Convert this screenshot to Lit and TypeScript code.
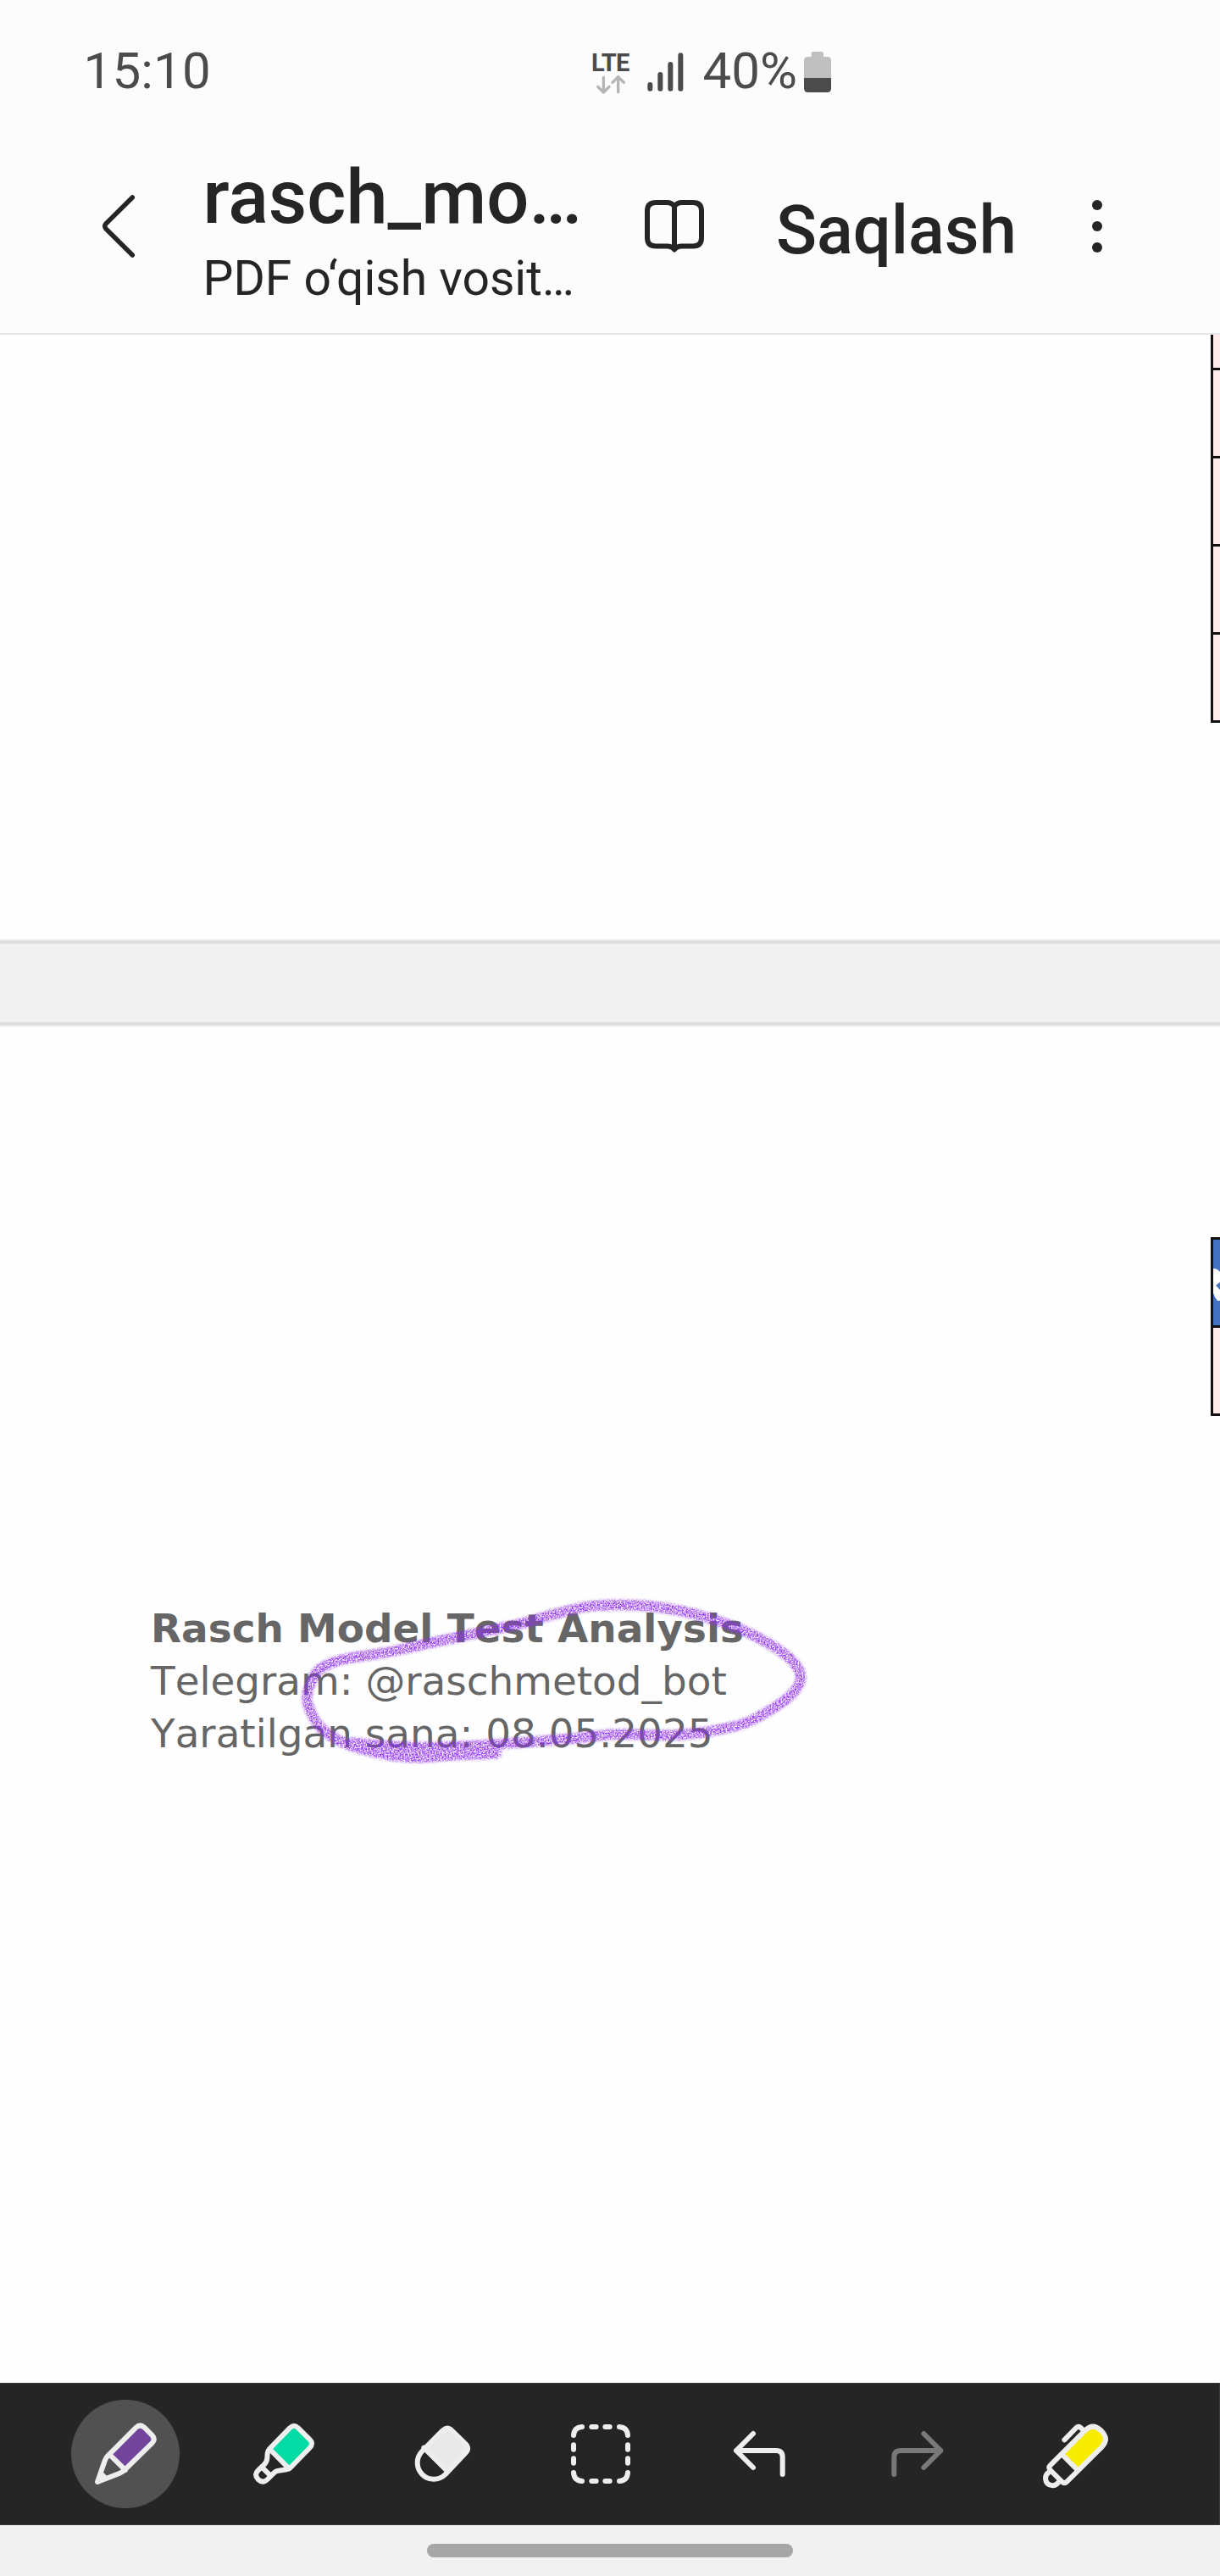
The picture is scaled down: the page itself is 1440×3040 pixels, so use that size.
import { LitElement, html, css, svg } from "lit";
import { customElement } from "lit/decorators.js";

type Pt = [number, number];

/** Smooth curve through the points (Catmull-Rom converted to cubic Béziers). */
function smooth(p: Pt[]): string {
  let d = `M${p[0][0]} ${p[0][1]}`;
  for (let i = 0; i < p.length - 1; i++) {
    const a = p[i - 1] ?? p[i];
    const b = p[i];
    const c = p[i + 1];
    const e = p[i + 2] ?? c;
    d += `C${b[0] + (c[0] - a[0]) / 6} ${b[1] + (c[1] - a[1]) / 6} ${c[0] - (e[0] - b[0]) / 6} ${c[1] - (e[1] - b[1]) / 6} ${c[0]} ${c[1]}`;
  }
  return d;
}

/** Pencil loop around the bot name, in thirds of a pixel. */
const LOOP: Pt[] = [
  [1338, 628], [1280, 630], [1180, 634], [1060, 642], [960, 634], [860, 612], [780, 582], [715, 535],
  [680, 480], [667, 430], [684, 370], [718, 325], [800, 294], [950, 270], [1100, 238],
  [1300, 195], [1440, 165], [1530, 138], [1660, 108], [1780, 102], [1910, 110], [2060, 140],
  [2210, 192], [2320, 250], [2390, 305], [2416, 358], [2390, 412], [2330, 460], [2220, 520],
  [2090, 550], [1960, 563], [1760, 560], [1610, 575], [1440, 588], [1260, 600], [1100, 606],
  [960, 602], [830, 590],
];

@customElement("tool-button")
class ToolButton extends LitElement {
  static properties = { name: {}, active: { type: Boolean } };
  declare name: string;
  declare active: boolean;

  static styles = css`
    :host { display: flex; justify-content: center; width: 187px; }
    .disc { width: 128px; height: 128px; border-radius: 50%; display: flex; align-items: center; justify-content: center; }
    .on { background: #515151; }
    svg { width: 96px; height: 96px; display: block; overflow: visible; }
    .ln { fill: none; stroke: #eee; stroke-width: 18; stroke-linecap: round; stroke-linejoin: round; }
    .dim { stroke: #787878; }
  `;

  private shapes: Record<string, [string, unknown]> = {
    pen: ["120 144 288 288", svg`
      <path fill="#72459b" d="M207 289L302 194Q316 181 331 194L358 221Q372 236 358 250L264 345Z"/>
      <path class="ln" d="M207 289L302 194Q316 181 331 194L358 221Q372 236 358 250L262 344Q254 352 244 356L165 387L191 312Q195 300 207 289ZM207 289L264 345"/>
      <path fill="#eee" d="M183 350L201 368L168 392L160 384Z"/>`],
    marker: ["681 144 288 288", svg`
      <path fill="#02dba3" d="M774 270L846 196Q861 181 876 196L916 236Q932 251 916 267L845 341Z"/>
      <path class="ln" d="M774 270L846 196Q861 181 876 196L916 236Q932 251 916 267L849 336Q844 341 834 343L806 347Q796 348 789 356L767 378Q751 394 734 378Q718 361 735 345L755 326Q765 316 766 303L767 286Q768 276 774 270ZM774 270L844 340M750 337L777 364"/>`],
    eraser: ["42 144 288 288", svg`
      <path fill="#e9e9e9" d="M118 272L187 205Q204 189 220 205L267 251Q285 268 268 285L200 355Z"/>
      <path class="ln" d="M114 279L187 205Q204 189 220 205L267 251Q285 268 268 285L196 361A58 58 0 0 1 114 279ZM121 266L206 351"/>`],
    select: ["603 144 288 288", svg`
      <path class="ln" d="M651 222Q653 194 681 192M813 192Q841 194 843 222M843 354Q841 382 813 384M681 384Q653 382 651 354
        M715 192H731M763 192H779M715 384H731M763 384H779M651 256V272M651 304V320M843 256V272M843 304V320"/>`],
    undo: ["1164 144 288 288", svg`
      <path class="ln" d="M1287 216L1227 276L1287 336M1227 276H1368Q1391 276 1391 299V360"/>`],
    redo: ["225 144 288 288", svg`
      <path class="ln dim" d="M391 216L451 276L391 336M451 276H309Q286 276 286 299V360"/>`],
    highlighter: ["786 144 288 288", svg`
      <path fill="#f8ec00" d="M881 293L962 209Q988 176 1018 206Q1048 236 1022 263L933 343Z"/>
      <path class="ln" d="M839 328L962 205Q990 177 1019 205Q1049 235 1021 264L898 386Q889 394 880 386L839 345Q831 336 839 328ZM879 288L934 343M889 238L931 195Q939 188 948 196L955 203
        M834 353Q822 360 822 375Q824 398 847 400Q861 399 868 388"/>`],
  };

  render() {
    const [box, art] = this.shapes[this.name];
    return html`<div class="disc ${this.active ? "on" : ""}"><svg viewBox=${box}>${art}</svg></div>`;
  }
}

@customElement("app-root")
class AppRoot extends LitElement {
  static styles = css`
    :host { display: block; width: 1440px; height: 3040px; overflow: hidden; background: #fefefe; font-family: Roboto, sans-serif; }
    * { box-sizing: border-box; }
    svg { display: block; flex: none; }
    .status { height: 168px; background: #fcfcfc; color: #4b4b4b; display: flex; font-size: 60px; line-height: 70px; padding-top: 48px; }
    .time { width: 697px; padding: 1px 0 0 98.500px; letter-spacing: 0.2px; flex: none; }
    .net { width: 60px; padding: 9px 0 0 1px; flex: none; }
    .lte { font: 700 29px/35px Roboto, sans-serif; letter-spacing: -0.7px; height: 32px; }
    .bars { margin: 14px 0 0 7px; }
    .pct { width: 119px; margin: 1px 0 0 21.500px; flex: none; }
    .batt { margin-top: 13px; }
    .header { height: 227px; background: #fcfcfc; border-bottom: 2px solid #e6e6e6; color: #252525; display: flex; }
    .back { margin: 60px 0 0 118px; }
    .titles { width: 446px; margin-left: 77.500px; white-space: nowrap; flex: none; }
    .title { font-size: 88.4px; font-weight: 500; line-height: 100px; margin-top: 15px; }
    .sub { font-size: 57px; line-height: 66px; margin-top: 13px; }
    .book { margin: 64px 0 0 70.500px; }
    .save { font-size: 79.4px; font-weight: 500; line-height: 92px; margin: 58px 0 0 82px; width: 281px; flex: none; }
    .more { margin: 67px 0 0 91px; }
    .page { display: flex; justify-content: flex-end; overflow: hidden; background: #fefefe; }
    .first { height: 715px; }
    .second { height: 1602px; position: relative; justify-content: space-between; }
    .gap { height: 100px; background: #f1f1f1; border: solid #dedede; border-width: 4px 0; box-shadow: 0 0 3px #d4d4d4; position: relative; z-index: 1; }
    .grid { width: 11px; border-left: 3px solid #111; align-self: flex-start; }
    .cell { height: 104px; border-bottom: 3px solid #111; background: #ffeaec; }
    .cut { height: 42px; }
    .lower { margin-top: 250px; border-top: 3px solid #111; }
    .head { background: #4573c4; padding-top: 34px; height: 104px; }
    .note { margin: 681px 0 0 178px; font: 46.88px/62px "DejaVu Sans", sans-serif; font-kerning: none; color: #666; white-space: nowrap; }
    .note b { display: block; }
    .ink { position: absolute; left: 140px; top: 650px; }
    .tools { height: 168px; background: #252525; border: 1px solid #3a3a3a; border-left: 0; display: flex; align-items: center; padding-left: 54.5px; }
    .nav { height: 60px; background: #f1f1f1; display: flex; justify-content: center; padding-top: 22px; }
    .pill { width: 432px; height: 16px; border-radius: 8px; background: #a6a6a6; }
  `;

  render() {
    return html`
      <div class="status">
        <div class="time">15:10</div>
        <div class="net">
          <div class="lte">LTE</div>
          <svg width="52" height="22" viewBox="114 144 156 66" fill="none" stroke="#b5b5b5" stroke-width="10" stroke-linecap="round" stroke-linejoin="round">
            <path d="M157 151V203M137 184L157 204L177 184M209 203V151M189 169L209 149L229 169"/>
          </svg>
        </div>
        <svg class="bars" width="44" height="48" viewBox="311 66 132 144" fill="none" stroke="#4b4b4b" stroke-width="18" stroke-linecap="round">
          <path d="M321 180V194M357 144V194M393 108V194M429 76V194"/>
        </svg>
        <div class="pct">40%</div>
        <svg class="batt" width="32" height="48" viewBox="867 63 96 144">
          <path fill="#bfbfbf" d="M893 81V69q0-6 6-6h31q6 0 6 6v12h13q14 0 14 14v62H867V95q0-14 14-14z"/>
          <path fill="#4b4b4b" d="M867 156H963V193q0 14-14 14H881q-14 0-14-14z"/>
        </svg>
      </div>
      <div class="header">
        <svg class="back" width="44" height="78" viewBox="0 0 44 78" fill="none" stroke="#252525" stroke-width="5.5" stroke-linecap="round" stroke-linejoin="round">
          <path d="M38.300 5L7 36Q4.500 39 7 42L38.300 73"/>
        </svg>
        <div class="titles">
          <div class="title">rasch_mo…</div>
          <div class="sub">PDF o‘qish vosit…</div>
        </div>
        <svg class="book" width="78" height="72" viewBox="0 0 78 72" fill="none" stroke="#252525" stroke-width="6" stroke-linejoin="round">
          <path d="M40 11.500Q37 7 31 7H18Q8 7 8 17V48.500Q8 58.500 18 58.500H31Q37 58.500 40 62.500Q43 58.500 49 58.500H62Q72 58.500 72 48.500V17Q72 7 62 7H49Q43 7 40 11.500ZM40 11.500V62"/>
        </svg>
        <div class="save">Saqlash</div>
        <svg class="more" width="14" height="66" viewBox="0 0 14 66" fill="#252525">
          <circle cx="7" cy="7" r="6"/><circle cx="7" cy="32" r="6"/><circle cx="7" cy="57" r="6"/>
        </svg>
      </div>
      <div class="page first">
        <div class="grid">
          <div class="cell cut"></div>
          ${[0, 1, 2, 3].map(() => html`<div class="cell"></div>`)}
        </div>
      </div>
      <div class="gap"></div>
      <div class="page second">
        <div class="note"><b>Rasch Model Test Analysis</b>Telegram: @raschmetod_bot<br>Yaratilgan sana: 08.05.2025</div>
        <div class="grid lower">
          <div class="cell head">
            <svg width="8" height="39" viewBox="0 0 8 39"><path fill="#fff" d="M0 0Q5 0 8 4V16L3 20L8 25V38H5Q2 35 0 29Z"/></svg>
          </div>
          <div class="cell"></div>
        </div>
        <svg class="ink" width="840" height="240" viewBox="0 0 2520 720">
          <defs>
            <filter id="grain" x="0" y="0" width="2520" height="720" filterUnits="userSpaceOnUse" color-interpolation-filters="sRGB">
              <feGaussianBlur in="SourceGraphic" stdDeviation="5" result="soft"/>
              <feTurbulence type="fractalNoise" baseFrequency="0.2" numOctaves="2" seed="4" result="noise"/>
              <feColorMatrix in="noise" type="matrix" values="0 0 0 0 0  0 0 0 0 0  0 0 0 0 0  2.2 0 0 0 -0.58" result="mask"/>
              <feComposite in="soft" in2="mask" operator="in"/>
            </filter>
          </defs>
          <path filter="url(#grain)" d=${smooth(LOOP)} fill="none" stroke="#9030ee" stroke-width="37" stroke-linecap="round" stroke-linejoin="round"/>
        </svg>
      </div>
      <div class="tools">
        <tool-button name="pen" active></tool-button>
        <tool-button name="marker"></tool-button>
        <tool-button name="eraser"></tool-button>
        <tool-button name="select"></tool-button>
        <tool-button name="undo"></tool-button>
        <tool-button name="redo"></tool-button>
        <tool-button name="highlighter"></tool-button>
      </div>
      <div class="nav"><div class="pill"></div></div>
    `;
  }
}
